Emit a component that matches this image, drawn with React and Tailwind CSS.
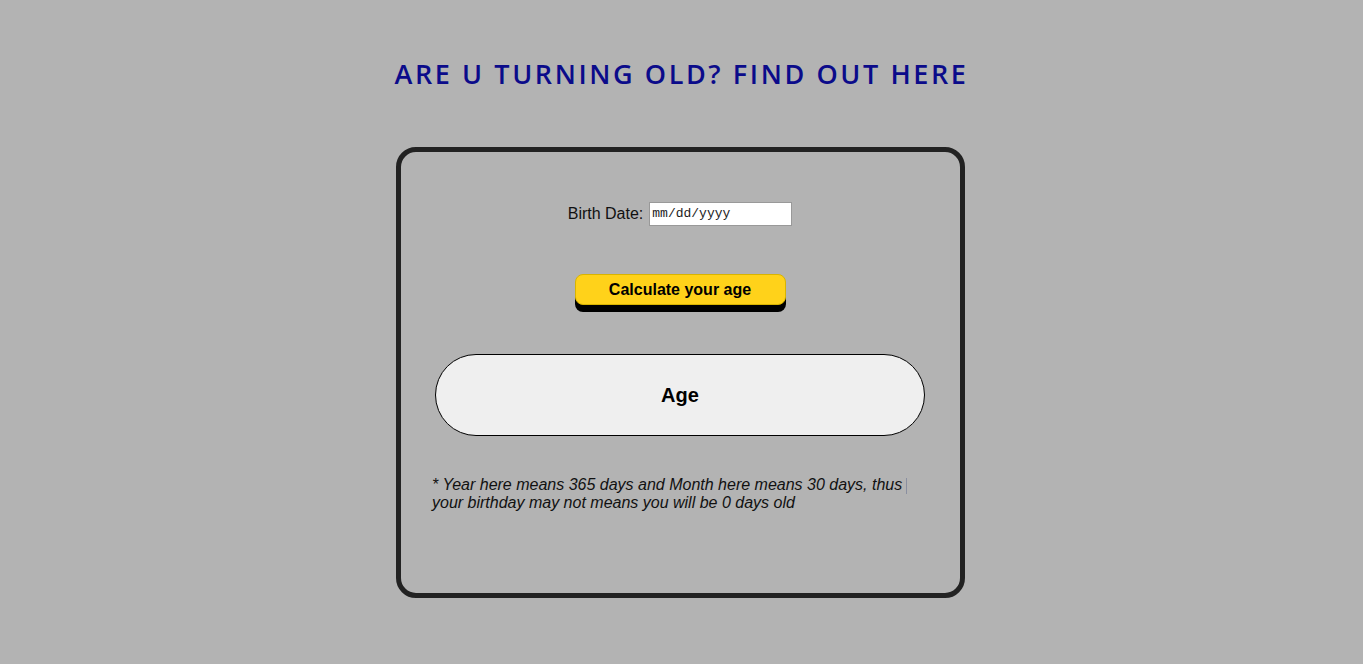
export default function App() {
  return (
    <div className="min-h-[664px] w-full bg-[#b3b3b3] flex flex-col items-center" style={{ fontFamily: '"Liberation Sans", Arial, sans-serif' }}>
      <h1 className="mt-[58px] text-[27px] font-semibold tracking-[2.6px] text-[#0b0b8a] leading-[32px]" style={{ fontFamily: '"Open Sans", sans-serif' }}>
        ARE U TURNING OLD? FIND OUT HERE
      </h1>
      <div className="mt-[57px] mr-[3px] w-[569px] h-[451px] border-[5px] border-[#222222] rounded-[20px] flex flex-col items-center">
        <div className="mt-[50px] flex items-center text-[16px] text-[#111]">
          <span className="mr-[6px]">Birth Date:</span>
          <div className="w-[143px] h-[24px] bg-white border border-[#999] flex items-center px-[2px] text-[13px] text-[#222]" style={{ fontFamily: '"Liberation Mono", "DejaVu Sans Mono", monospace' }}>
            mm/dd/yyyy
          </div>
        </div>
        <div className="mt-[48px] relative w-[211px] h-[38px]">
          <div className="absolute left-0 right-0 top-[7px] h-[31px] bg-black rounded-[8px]"></div>
          <button className="absolute left-0 right-0 top-0 h-[31px] bg-[#ffd21a] border border-[#d9b400] rounded-[8px] font-bold text-[16px] text-black">
            Calculate your age
          </button>
        </div>
        <div className="mt-[42px] w-[490px] h-[82px] rounded-full bg-[#efefef] border border-black flex items-center justify-center text-[20px] font-bold text-black">
          Age
        </div>
        <div className="mt-[40px] w-[490px] relative text-[16px] italic leading-[18px] text-[#111] -ml-[6px]">
          <p>* Year here means 365 days and Month here means 30 days, thus<br />your birthday may not means you will be 0 days old</p>
          <div className="absolute left-[474px] top-[2px] w-px h-[16px] bg-[#8a8fa0]"></div>
        </div>
      </div>
    </div>
  );
}
